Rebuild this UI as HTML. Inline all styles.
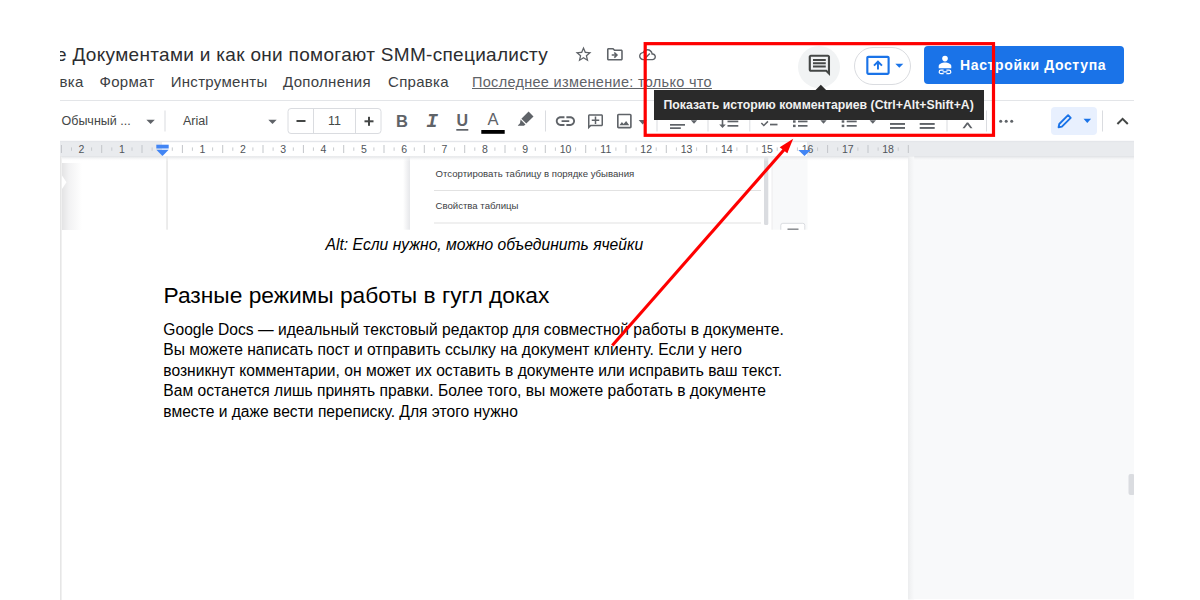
<!DOCTYPE html>
<html lang="ru">
<head>
<meta charset="utf-8">
<title>Google Docs</title>
<style>
html,body{margin:0;padding:0;background:#fff;}
body{width:1200px;height:600px;position:relative;overflow:hidden;font-family:"Liberation Sans",sans-serif;color:#202124;}
.abs{position:absolute;white-space:nowrap;}
#app{position:absolute;left:60px;top:0;width:1073.5px;height:600px;overflow:hidden;background:#fff;}
#inner{position:absolute;left:-60px;top:0;width:1200px;height:600px;}
svg.layer{position:absolute;left:0;top:0;width:1200px;height:600px;overflow:visible;}
#title{left:56px;top:44px;font-size:19px;line-height:22px;color:#2c2d30;letter-spacing:0.31px;}
.menu{top:73.4px;font-size:15px;line-height:17px;color:#3c4043;letter-spacing:0.3px;}
#last{left:472px;top:73.7px;font-size:14.5px;line-height:17px;color:#5f6368;text-decoration:underline;letter-spacing:0.3px;}
#tbline{left:60px;top:100px;width:1074px;height:1px;background:#e3e5e8;}
.tbtxt{top:113px;font-size:12.5px;line-height:16px;color:#444746;}
.ico{color:#5f6368;text-align:center;}
#ruler{left:60px;top:141px;width:1074px;height:15.5px;background:#e9ebee;}
#rulerw{left:162.2px;top:141px;width:644.6px;height:15.5px;background:#fff;}
.rn{top:143px;width:20px;text-align:center;font-size:10.5px;line-height:12px;color:#50555a;}
#doc{left:62px;top:156px;width:847px;height:444px;background:#fff;}
#side{left:908.2px;top:156px;width:226px;height:443px;background:#f8f9fa;}
.body{left:163.3px;font-size:15.64px;line-height:20.45px;color:#000;}
#h2{left:163.5px;top:281px;font-size:22.76px;line-height:28px;color:#000;}
#cap{left:325.5px;top:236px;font-size:15.66px;line-height:18px;color:#000;font-style:italic;}
.emb{font-size:9.62px;line-height:12px;color:#3c4043;left:435.5px;}
#tip{left:654px;top:90px;width:329.5px;height:29.7px;background:#2a2a2a;}
#tiptxt{left:663.5px;top:98.200px;font-size:12.27px;line-height:15px;color:#f1f1f1;font-weight:bold;}
#share{left:924px;top:46.200px;width:200.200px;height:38.300px;background:#1a73e8;border-radius:4px;}
#sharetxt{left:960px;top:57px;font-size:14px;line-height:16px;color:#fff;font-weight:bold;letter-spacing:0.64px;}
#present{left:854px;top:47px;width:55px;height:36px;border:1px solid #dadce0;border-radius:19px;background:#fff;}
#cbtn{left:798px;top:45.5px;width:42px;height:42px;border-radius:21px;background:#f1f3f4;}
#editbg{left:1051px;top:107px;width:45.5px;height:27.5px;border-radius:4px;background:#e8f0fe;}
</style>
</head>
<body>
<div id="app"><div id="inner">
  <div class="abs" id="doc"></div>
  <div class="abs" id="side"></div>

  <div class="abs" id="title">е Документами и как они помогают SMM-специалисту</div>
  <div class="abs menu" style="left:59.5px;">вка</div>
  <div class="abs menu" style="left:99.5px;">Формат</div>
  <div class="abs menu" style="left:170.7px;">Инструменты</div>
  <div class="abs menu" style="left:283px;">Дополнения</div>
  <div class="abs menu" style="left:388px;">Справка</div>
  <div class="abs" id="last">Последнее изменение: только что</div>
  <div class="abs" id="tbline"></div>

  <div class="abs" id="cbtn"></div>
  <div class="abs" id="present"></div>
  <div class="abs" id="share"></div>
  <div class="abs" id="sharetxt">Настройки Доступа</div>
  <div class="abs" id="editbg"></div>

  <div class="abs tbtxt" style="left:61.5px;">Обычный ...</div>
  <div class="abs tbtxt" style="left:183px;">Arial</div>
  <div class="abs tbtxt" style="left:314px;width:41px;text-align:center;">11</div>
  <div class="abs ico" style="left:392px;top:110px;width:20px;font:bold 16.5px/22px 'Liberation Sans',sans-serif;">B</div>
  <div class="abs ico" style="left:422px;top:110.5px;width:20px;font:italic bold 19.5px/22px 'Liberation Mono',monospace;">I</div>
  <div class="abs ico" style="left:452.3px;top:109.7px;width:20px;font:bold 16px/22px 'Liberation Sans',sans-serif;">U</div>
  <div class="abs ico" style="left:483px;top:108px;width:20px;font:16.5px/22px 'Liberation Sans',sans-serif;">A</div>

  <div class="abs" id="ruler"></div>
  <div class="abs" id="rulerw"></div>
  <div class="abs rn" style="left:71.5px;">2</div><div class="abs rn" style="left:111.9px;">1</div><div class="abs rn" style="left:192.5px;">1</div><div class="abs rn" style="left:232.9px;">2</div><div class="abs rn" style="left:273.2px;">3</div><div class="abs rn" style="left:313.5px;">4</div><div class="abs rn" style="left:353.8px;">5</div><div class="abs rn" style="left:394.2px;">6</div><div class="abs rn" style="left:434.5px;">7</div><div class="abs rn" style="left:474.8px;">8</div><div class="abs rn" style="left:515.2px;">9</div><div class="abs rn" style="left:555.5px;">10</div><div class="abs rn" style="left:595.8px;">11</div><div class="abs rn" style="left:636.2px;">12</div><div class="abs rn" style="left:676.5px;">13</div><div class="abs rn" style="left:716.8px;">14</div><div class="abs rn" style="left:757.1px;">15</div><div class="abs rn" style="left:797.5px;">16</div><div class="abs rn" style="left:837.8px;">17</div><div class="abs rn" style="left:878.1px;">18</div>

  <div class="abs emb" style="top:168px;">Отсортировать таблицу в порядке убывания</div>
  <div class="abs emb" style="top:200px;">Свойства таблицы</div>

  <svg class="layer" viewBox="0 0 1200 600">
    <!-- left thin line -->
    <rect x="60" y="156" width="1.6" height="444" fill="#e6e6e6"/>
    <rect x="60" y="140.800" width="1074" height="1.400" fill="#e4e6ea"/>
    <!-- ruler ticks -->
    <rect x="60.9" y="145" width="1" height="8" fill="#c2c5c9"/><rect x="71.0" y="147.4" width="1" height="3.4" fill="#c8cbcf"/><rect x="91.1" y="147.4" width="1" height="3.4" fill="#c8cbcf"/><rect x="101.2" y="145" width="1" height="8" fill="#c2c5c9"/><rect x="111.3" y="147.4" width="1" height="3.4" fill="#c8cbcf"/><rect x="131.5" y="147.4" width="1" height="3.4" fill="#c8cbcf"/><rect x="141.5" y="145" width="1" height="8" fill="#c2c5c9"/><rect x="151.6" y="147.4" width="1" height="3.4" fill="#c8cbcf"/><rect x="171.8" y="147.4" width="1" height="3.4" fill="#c8cbcf"/><rect x="181.9" y="145" width="1" height="8" fill="#c2c5c9"/><rect x="191.9" y="147.4" width="1" height="3.4" fill="#c8cbcf"/><rect x="212.1" y="147.4" width="1" height="3.4" fill="#c8cbcf"/><rect x="222.2" y="145" width="1" height="8" fill="#c2c5c9"/><rect x="232.3" y="147.4" width="1" height="3.4" fill="#c8cbcf"/><rect x="252.4" y="147.4" width="1" height="3.4" fill="#c8cbcf"/><rect x="262.5" y="145" width="1" height="8" fill="#c2c5c9"/><rect x="272.6" y="147.4" width="1" height="3.4" fill="#c8cbcf"/><rect x="292.8" y="147.4" width="1" height="3.4" fill="#c8cbcf"/><rect x="302.9" y="145" width="1" height="8" fill="#c2c5c9"/><rect x="312.9" y="147.4" width="1" height="3.4" fill="#c8cbcf"/><rect x="333.1" y="147.4" width="1" height="3.4" fill="#c8cbcf"/><rect x="343.2" y="145" width="1" height="8" fill="#c2c5c9"/><rect x="353.3" y="147.4" width="1" height="3.4" fill="#c8cbcf"/><rect x="373.4" y="147.4" width="1" height="3.4" fill="#c8cbcf"/><rect x="383.5" y="145" width="1" height="8" fill="#c2c5c9"/><rect x="393.6" y="147.4" width="1" height="3.4" fill="#c8cbcf"/><rect x="413.8" y="147.4" width="1" height="3.4" fill="#c8cbcf"/><rect x="423.8" y="145" width="1" height="8" fill="#c2c5c9"/><rect x="433.9" y="147.4" width="1" height="3.4" fill="#c8cbcf"/><rect x="454.1" y="147.4" width="1" height="3.4" fill="#c8cbcf"/><rect x="464.2" y="145" width="1" height="8" fill="#c2c5c9"/><rect x="474.3" y="147.4" width="1" height="3.4" fill="#c8cbcf"/><rect x="494.4" y="147.4" width="1" height="3.4" fill="#c8cbcf"/><rect x="504.5" y="145" width="1" height="8" fill="#c2c5c9"/><rect x="514.6" y="147.4" width="1" height="3.4" fill="#c8cbcf"/><rect x="534.8" y="147.4" width="1" height="3.4" fill="#c8cbcf"/><rect x="544.8" y="145" width="1" height="8" fill="#c2c5c9"/><rect x="554.9" y="147.4" width="1" height="3.4" fill="#c8cbcf"/><rect x="575.1" y="147.4" width="1" height="3.4" fill="#c8cbcf"/><rect x="585.2" y="145" width="1" height="8" fill="#c2c5c9"/><rect x="595.2" y="147.4" width="1" height="3.4" fill="#c8cbcf"/><rect x="615.4" y="147.4" width="1" height="3.4" fill="#c8cbcf"/><rect x="625.5" y="145" width="1" height="8" fill="#c2c5c9"/><rect x="635.6" y="147.4" width="1" height="3.4" fill="#c8cbcf"/><rect x="655.7" y="147.4" width="1" height="3.4" fill="#c8cbcf"/><rect x="665.8" y="145" width="1" height="8" fill="#c2c5c9"/><rect x="675.9" y="147.4" width="1" height="3.4" fill="#c8cbcf"/><rect x="696.1" y="147.4" width="1" height="3.4" fill="#c8cbcf"/><rect x="706.2" y="145" width="1" height="8" fill="#c2c5c9"/><rect x="716.2" y="147.4" width="1" height="3.4" fill="#c8cbcf"/><rect x="736.4" y="147.4" width="1" height="3.4" fill="#c8cbcf"/><rect x="746.5" y="145" width="1" height="8" fill="#c2c5c9"/><rect x="756.6" y="147.4" width="1" height="3.4" fill="#c8cbcf"/><rect x="776.7" y="147.4" width="1" height="3.4" fill="#c8cbcf"/><rect x="786.8" y="145" width="1" height="8" fill="#c2c5c9"/><rect x="796.9" y="147.4" width="1" height="3.4" fill="#c8cbcf"/><rect x="817.1" y="147.4" width="1" height="3.4" fill="#c8cbcf"/><rect x="827.1" y="145" width="1" height="8" fill="#c2c5c9"/><rect x="837.2" y="147.4" width="1" height="3.4" fill="#c8cbcf"/><rect x="857.4" y="147.4" width="1" height="3.4" fill="#c8cbcf"/><rect x="867.5" y="145" width="1" height="8" fill="#c2c5c9"/><rect x="877.6" y="147.4" width="1" height="3.4" fill="#c8cbcf"/><rect x="897.7" y="147.4" width="1" height="3.4" fill="#c8cbcf"/><rect x="907.8" y="145" width="1" height="8" fill="#c2c5c9"/>
    <!-- ruler markers -->
    <g fill="#4285f4">
      <rect x="156.3" y="144.7" width="12.4" height="3.8"/>
      <path d="M156.3 149.7h12.4l-6.2 6.2z"/>
      <path d="M798.3 150h12.4l-6.2 6z"/>
    </g>
    <!-- title icons -->
    <g fill="#5f6368">
      <path transform="translate(573.900 44.800) scale(.8)" d="M22 9.24l-7.19-.62L12 2 9.19 8.63 2 9.24l5.46 4.73L5.82 21 12 17.27 18.18 21l-1.63-7.03L22 9.24zM12 15.4l-3.76 2.27 1-4.28-3.32-2.88 4.38-.38L12 6.1l1.71 4.04 4.38.38-3.32 2.88 1 4.28L12 15.4z"/>
      <path transform="translate(605.4 44.8) scale(.79)" d="M20 6h-8l-2-2H4c-1.1 0-1.99.9-1.99 2L2 18c0 1.1.9 2 2 2h16c1.1 0 2-.9 2-2V8c0-1.1-.9-2-2-2zm0 12H4V6h5.17l2 2H20v10zm-7.84-4H8v-2h4.16l-1.59-1.59L11.99 9 16 13.01 11.99 17l-1.41-1.41L12.16 14z"/>
      <path transform="translate(639 46.2) scale(.708)" d="M19.35 10.04C18.67 6.59 15.64 4 12 4 9.11 4 6.6 5.64 5.35 8.04 2.34 8.36 0 10.91 0 14c0 3.31 2.69 6 6 6h13c2.76 0 5-2.24 5-5 0-2.64-2.05-4.78-4.65-4.96zM19 18H6c-2.21 0-4-1.79-4-4 0-2.05 1.53-3.76 3.56-3.97l1.07-.11.5-.95C8.08 7.14 9.94 6 12 6c2.62 0 4.88 1.86 5.39 4.43l.3 1.5 1.53.11c1.56.1 2.78 1.41 2.78 2.96 0 1.65-1.35 3-3 3zm-9-3.82l-2.09-2.09L6.5 13.5 10 17l6.01-6.01-1.41-1.41z"/>
    </g>
    <!-- comment history icon -->
    <path fill="#444746" transform="translate(806.6 52.6) scale(1.065)" d="M21.99 4c0-1.1-.89-2-1.99-2H4c-1.1 0-2 .9-2 2v12c0 1.1.9 2 2 2h14l4 4-.01-18zM20 4v13.17L18.83 16H4V4h16zM6 12h12v2H6zm0-3h12v2H6zm0-3h12v2H6z"/>
    <!-- present icon -->
    <path fill="#1a73e8" transform="translate(865.2 52.6) scale(1.064)" d="M21 3H3c-1.11 0-2 .89-2 2v14c0 1.11.89 2 2 2h18c1.11 0 2-.89 2-2V5c0-1.11-.89-2-2-2zm0 16.020H3V4.980h18v14.040zM11.100 16v-5.300l-2.200 2.200-1.300-1.300L12 7.200l4.400 4.400-1.300 1.300-2.200-2.200V16z"/>
    <path fill="#1a73e8" d="M895.3 63.7h8l-4 4z"/>
    <!-- share person+link icon -->
    <g fill="#fff">
      <circle cx="945" cy="58.6" r="2.8"/>
      <path d="M938.7 68.3v-2.2c0-2.2 3.6-3.5 6.3-3.5s6.3 1.3 6.3 3.5v2.2z"/>
    </g>
    <g fill="none" stroke="#fff" stroke-width="1.2">
      <path d="M943.6 70.1h-2.6a1.8 1.8 0 0 0 0 3.6h2.6M946.4 70.1h2.6a1.8 1.8 0 0 1 0 3.6h-2.6M942.6 71.9h4.8"/>
    </g>
    <!-- toolbar: carets & separators -->
    <g fill="#5f6368">
      <path d="M146.4 119.8h8.4l-4.2 4.3z"/>
      <path d="M268.3 119.8h8.4l-4.2 4.3z"/>
      <path d="M638.7 120h8l-4 4.5z"/>
      <path d="M690.8 120.3h6.4l-3.2 3.5z"/>
      <path d="M820.3 120.3h6.4l-3.2 3.5z"/>
      <path d="M869.6 120.3h6.4l-3.2 3.5z"/>
    </g>
    <g fill="#dadce0">
      <rect x="164.5" y="110.5" width="1" height="21"/>
      <rect x="545" y="110.5" width="1" height="21"/>
      <rect x="656.5" y="110.5" width="1" height="21"/>
      <rect x="707.5" y="110.5" width="1" height="21"/>
      <rect x="749.3" y="110.5" width="1" height="21"/>
      <rect x="946.5" y="110.5" width="1" height="21"/>
      <rect x="986" y="110.5" width="1" height="21"/>
      <rect x="1102" y="110.5" width="1" height="21"/>
    </g>
    <!-- font size box -->
    <rect x="288" y="108.5" width="93" height="25" rx="3" fill="none" stroke="#dadce0" stroke-width="1"/>
    <rect x="313" y="108.5" width="1" height="25" fill="#dadce0"/>
    <rect x="355" y="108.5" width="1" height="25" fill="#dadce0"/>
    <g fill="#444746">
      <rect x="296.5" y="120" width="9" height="2"/>
      <rect x="364.5" y="120.3" width="9" height="2"/>
      <rect x="368" y="116.8" width="2" height="9"/>
    </g>
    <!-- U underline, A bar -->
    <rect x="456.3" y="129" width="12" height="1.7" fill="#5f6368"/>
    <rect x="481.3" y="130" width="23.4" height="3.8" fill="#000"/>
    <!-- highlighter -->
    <g fill="#5f6368">
      <path d="M528.6 111.5l4.9 4.9-7.2 7.2-4.9-4.9z"/>
      <path d="M520.6 119.6l4.9 4.9-1.6 1.2h-5.9l-.2-.3 2.2-2.2z"/>
    </g>
    <!-- link -->
    <path fill="#5f6368" transform="translate(553.9 109.6) scale(.96)" d="M3.9 12c0-1.71 1.39-3.1 3.1-3.1h4V7H7c-2.76 0-5 2.24-5 5s2.24 5 5 5h4v-1.9H7c-1.71 0-3.1-1.39-3.1-3.1zM8 13h8v-2H8v2zm9-6h-4v1.9h4c1.71 0 3.1 1.39 3.1 3.1s-1.39 3.1-3.1 3.1h-4V17h4c2.76 0 5-2.24 5-5s-2.24-5-5-5z"/>
    <!-- add comment (mirrored) -->
    <path fill="#5f6368" transform="translate(604.5 112.7) scale(-.75 .75)" d="M22 4c0-1.1-.9-2-2-2H4c-1.1 0-2 .9-2 2v12c0 1.1.9 2 2 2h14l4 4V4zm-2 13.17L18.83 16H4V4h16v13.170zM13 5h-2v4H7v2h4v4h2v-4h4V9h-4z"/>
    <!-- image -->
    <path fill="#5f6368" transform="translate(614.55 111.25) scale(.817)" d="M19 5v14H5V5h14m0-2H5c-1.1 0-2 .9-2 2v14c0 1.1.9 2 2 2h14c1.1 0 2-.9 2-2V5c0-1.1-.9-2-2-2zm-4.860 8.860l-3 3.870L9 13.140 6 17h12l-3.860-5.140z"/>
    <!-- partially hidden toolbar icons -->
    <g fill="#5f6368">
      <!-- align -->
      <rect x="670" y="124" width="15" height="1.7"/><rect x="670" y="127.3" width="10.8" height="1.7"/>
      <!-- line spacing -->
      <rect x="721.7" y="116" width="1.6" height="10"/><path d="M719.2 124.4h6.6l-3.3 3.6z"/>
      <rect x="727.5" y="120.6" width="10.8" height="1.7"/><rect x="727.5" y="125" width="10.8" height="1.7"/>
      <!-- checklist -->
      <path d="M760.8 123.6l1.1-1.1 1.9 1.9 3.6-3.6 1.1 1.1-4.700 4.700z"/><rect x="770" y="123.700" width="7.500" height="1.700"/>
      <!-- bullets -->
      <rect x="793" y="120.3" width="2.600" height="2.400"/><rect x="793" y="124.700" width="2.600" height="2.400"/>
      <rect x="798" y="120.600" width="9.500" height="1.700"/><rect x="798" y="125" width="9.500" height="1.700"/>
      <!-- numbers -->
      <rect x="841.700" y="120.300" width="2.600" height="2.400"/><rect x="841.700" y="124.700" width="2.600" height="2.400"/>
      <rect x="846.700" y="120.600" width="10" height="1.700"/><rect x="846.700" y="125" width="10" height="1.700"/>
      <!-- indent dec / inc -->
      <rect x="890" y="123" width="15" height="1.900"/><rect x="890" y="127" width="15" height="1.900"/>
      <rect x="919.700" y="123" width="15" height="1.900"/><rect x="919.700" y="127" width="15" height="1.900"/>
      <!-- clear formatting -->
      <path d="M962.500 128.300l4.300-5.800h1.400l4.300 5.800h-2.200l-2.800-3.800-2.800 3.800z"/>
      <!-- more dots -->
      <circle cx="1000.700" cy="121.300" r="1.500"/><circle cx="1006.200" cy="121.300" r="1.500"/><circle cx="1011.700" cy="121.300" r="1.500"/>
    </g>
    <!-- edit pencil -->
    <g fill="none" stroke="#1a73e8" stroke-width="1.900" stroke-linejoin="round">
      <path d="M1058.600 127.300l.7-3.300 8.800-8.800 2.600 2.600-8.800 8.800z"/>
    </g>
    <path fill="#1a73e8" d="M1083.500 118.800h7.600l-3.800 4.100z"/>
    <path fill="none" stroke="#444746" stroke-width="2" d="M1117.400 124l5.200-5.200 5.200 5.200"/>
    <!-- embedded screenshot -->
    <defs>
      <linearGradient id="lg1" x1="0" x2="1" y1="0" y2="0"><stop offset="0" stop-color="#fff"/><stop offset="1" stop-color="#e6e7ea"/></linearGradient>
      <linearGradient id="lg2" x1="0" x2="1" y1="0" y2="0"><stop offset="0" stop-color="#e4e4e5"/><stop offset="0.350" stop-color="#f2f2f3"/><stop offset="1" stop-color="#fff"/></linearGradient>
      <linearGradient id="lg4" x1="0" x2="1" y1="0" y2="0"><stop offset="0" stop-color="#e9eaec"/><stop offset="0.300" stop-color="#f1f2f3"/><stop offset="1" stop-color="#f8f9fa"/></linearGradient>
      <linearGradient id="lg3" x1="0" x2="0" y1="0" y2="1"><stop offset="0" stop-color="#dfe1e4"/><stop offset="1" stop-color="#fff" stop-opacity="0"/></linearGradient>
    </defs>
    <rect x="403" y="156.500" width="7" height="73.200" fill="url(#lg1)"/>
    <rect x="434" y="190" width="327" height="1" fill="#e2e2e2"/>
    <rect x="434" y="222.500" width="327" height="1" fill="#e2e2e2"/>
    <rect x="764" y="157" width="4.300" height="68" rx="1.500" fill="#dadce0"/>
    <rect x="771.700" y="156.500" width="35.800" height="73.200" fill="#f8f9fa"/>
    <rect x="771.500" y="156.500" width="1.200" height="73.200" fill="#f0f0f0"/>
    <path d="M780.800 229.700v-4.400a2 2 0 0 1 2-2h20a2 2 0 0 1 2 2v4.400" fill="#fff" stroke="#dadce0" stroke-width="1"/>
    <rect x="787.500" y="228.600" width="11" height="1.100" fill="#5f6368"/>
    <!-- page left edge -->
    <rect x="166.200" y="156.500" width="1.700" height="73.200" fill="#e9e9e9"/>
    <!-- left tab shadow -->
    <path d="M62 163h20v67h-20v-41l4.500-6.700-4.500-6.800z" fill="url(#lg2)"/>
    <!-- shadow under ruler -->
    <rect x="62" y="156.300" width="1072" height="5" fill="url(#lg3)"/>
    <!-- right side border / scrollbar -->
    <rect x="908.200" y="156.500" width="6" height="443" fill="url(#lg4)"/>
    <rect x="1128.500" y="474" width="6" height="21" rx="2" fill="#dadce0"/>
  </svg>

  <div class="abs" id="cap">Alt: Если нужно, можно объединить ячейки</div>
  <div class="abs" id="h2">Разные режимы работы в гугл доках</div>
  <div class="abs body" style="top:320px;">Google Docs — идеальный текстовый редактор для совместной работы в документе.<br>Вы можете написать пост и отправить ссылку на документ клиенту. Если у него<br>возникнут комментарии, он может их оставить в документе или исправить ваш текст.<br>Вам останется лишь принять правки. Более того, вы можете работать в документе<br>вместе и даже вести переписку. Для этого нужно</div>

  <!-- tooltip -->
  <div class="abs" id="tip"></div>
  <div class="abs" id="tiptxt">Показать историю комментариев (Ctrl+Alt+Shift+A)</div>
  <svg class="layer" viewBox="0 0 1200 600">
    <path d="M815.300 90.300l5.500-5.500 5.500 5.500z" fill="#2a2a2a"/>
    <!-- red annotations -->
    <rect x="645.200" y="43.650" width="348.300" height="91.650" fill="none" stroke="#fe0000" stroke-width="3.200"/>
    <line x1="612.300" y1="345.600" x2="784.500" y2="149.200" stroke="#fe0000" stroke-width="3.100"/>
    <path d="M793.200 138.800L787.300 153.300 779.700 147.200z" fill="#fe0000"/>
  </svg>
</div></div>
</body>
</html>
